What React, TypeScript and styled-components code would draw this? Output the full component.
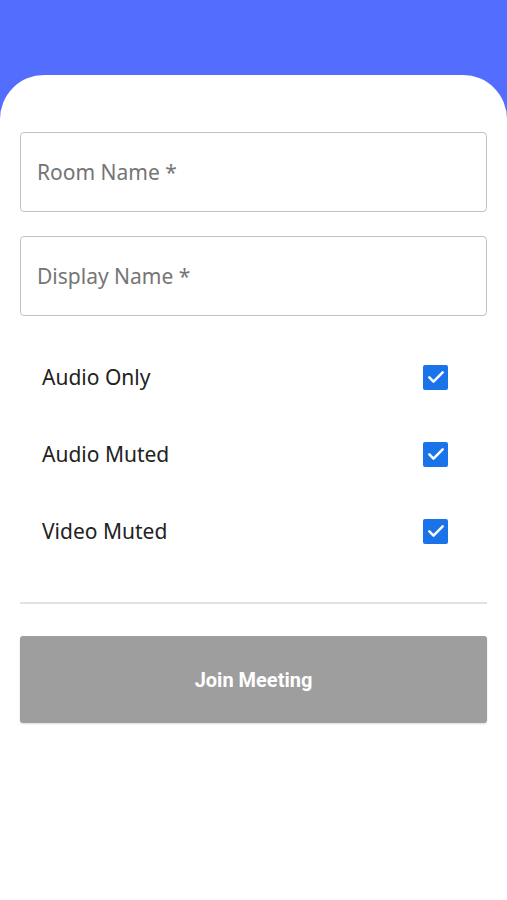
import React, { ReactElement } from 'react';
import styled, { createGlobalStyle } from 'styled-components';

const GlobalStyle = createGlobalStyle`
  html, body {
    margin: 0;
    padding: 0;
    background: #536dfe;
  }
  * {
    box-sizing: border-box;
  }
`;

const Page = styled.div`
  min-height: 900px;
  padding-top: 75px;
  background: #536dfe;
  display: flex;
  flex-direction: column;
`;

const Sheet = styled.div`
  flex: 1;
  background: #fff;
  border-radius: 44px 44px 0 0;
  padding: 57px 20px 0 20px;
  display: flex;
  flex-direction: column;
`;

const Field = styled.input`
  height: 80px;
  width: 100%;
  border: 1.5px solid #c2c2c2;
  border-radius: 4px;
  padding: 0 16px;
  font-family: 'Noto Sans', Roboto, sans-serif;
  font-size: 21px;
  color: #333;
  background: #fff;
  outline: none;
  margin-bottom: 24px;

  ::placeholder {
    color: #7a7a7a;
  }
`;

const Options = styled.div`
  display: flex;
  flex-direction: column;
  padding: 22px 39px 0 22px;
  gap: 47px;
`;

const OptionRow = styled.label`
  display: flex;
  align-items: center;
  justify-content: space-between;
  height: 30px;
  font-family: 'Noto Sans', Roboto, sans-serif;
  font-size: 21px;
  color: #222;
`;

const Box = styled.span<{ $checked: boolean }>`
  width: 25px;
  height: 25px;
  border-radius: 2px;
  background: ${(p) => (p.$checked ? '#1a73e8' : '#fff')};
  border: ${(p) => (p.$checked ? 'none' : '2px solid #777')};
  display: flex;
  align-items: center;
  justify-content: center;
`;

const Divider = styled.hr`
  border: none;
  height: 2px;
  background: #e2e2e2;
  margin: 56px 0 32px 0;
`;

const JoinButton = styled.button`
  height: 87px;
  width: 100%;
  border: none;
  border-radius: 3px;
  background: #9e9e9e;
  color: #fff;
  font-family: Roboto, sans-serif;
  font-weight: 700;
  font-size: 20px;
  box-shadow: 0 1px 2px rgba(0, 0, 0, 0.15);
`;

const Check = (): ReactElement => (
  <svg width="20" height="20" viewBox="0 0 24 24" fill="none">
    <path d="M4 12.5l5 5L20 6.5" stroke="#fff" strokeWidth="3" strokeLinecap="round" strokeLinejoin="round" />
  </svg>
);

const options = ['Audio Only', 'Audio Muted', 'Video Muted'];

export default function App(): ReactElement {
  return (
    <>
      <GlobalStyle />
      <Page>
        <Sheet>
          <Field placeholder="Room Name *" />
          <Field placeholder="Display Name *" />
          <Options>
            {options.map((label) => (
              <OptionRow key={label}>
                {label}
                <Box $checked>
                  <Check />
                </Box>
              </OptionRow>
            ))}
          </Options>
          <Divider />
          <JoinButton>Join Meeting</JoinButton>
        </Sheet>
      </Page>
    </>
  );
}
